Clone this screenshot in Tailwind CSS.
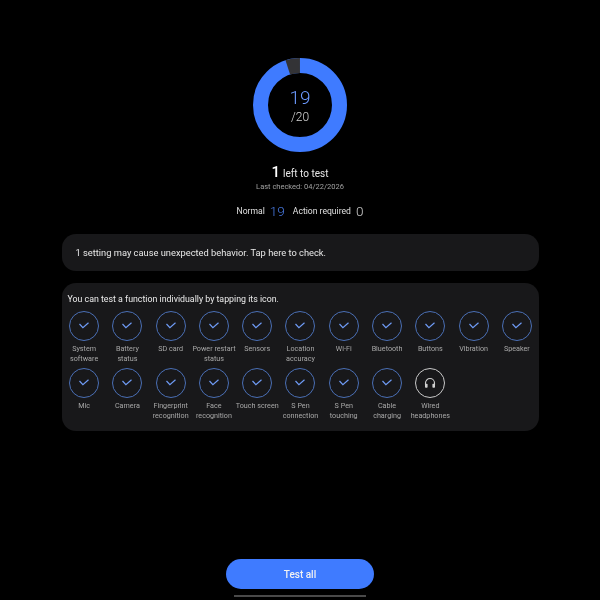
<!DOCTYPE html>
<html lang="en">
<head>
  <meta charset="UTF-8" />
  <title>Diagnostics</title>
  <script src="https://cdn.jsdelivr.net/npm/@tailwindcss/browser@4"></script>
</head>
<body class="bg-black text-white font-['Roboto',sans-serif]">
  <div class="w-[600px] h-[600px] overflow-hidden flex flex-col items-center pt-[58px] will-change-transform">

    <!-- Ring -->
    <div class="relative w-[94px] h-[94px]">
      <svg width="94" height="94" viewBox="0 0 94 94">
        <circle cx="47" cy="47" r="39.5" fill="none" stroke="#3f7bff" stroke-width="15" />
        <circle cx="47" cy="47" r="39.5" fill="none" stroke="#333336" stroke-width="15" pathLength="20" stroke-dasharray="1 19" transform="rotate(-108 47 47)" />
      </svg>
      <div class="absolute inset-0 flex flex-col items-center justify-center">
        <span class="text-[19px] leading-[24px] font-light text-[#6c9aff]">19</span>
        <span class="text-[12px] leading-[14px] font-light text-[#d8d8d8]">/20</span>
      </div>
    </div>

    <!-- Summary -->
    <div class="mt-[10px] flex items-baseline gap-[3px] h-[20px] leading-[20px]">
      <span class="text-[15px] font-medium">1</span>
      <span class="text-[10px] text-[#e8e8e8]">left to test</span>
    </div>
    <p class="mt-[-1px] text-[7.5px] leading-[12px] text-[#a0a0a0]">Last checked: 04/22/2026</p>
    <div class="mt-[8px] flex items-center h-[20px] text-[8.6px] text-[#e0e0e0]">
      <span>Normal</span>
      <span class="ml-[5px] text-[13.5px] font-light text-[#4a7de8]">19</span>
      <span class="ml-[8px]">Action required</span>
      <span class="ml-[5px] text-[13.5px] font-light text-[#d0d0d0]">0</span>
    </div>

    <!-- Notice -->
    <div class="mt-[13px] w-[477px] h-[37px] rounded-[14px] bg-[#18181a] flex items-center pl-[14px] text-[9.3px] text-[#e8e8e8]">
      1 setting may cause unexpected behavior. Tap here to check.
    </div>

    <!-- Function tests -->
    <div class="mt-[12px] w-[477px] h-[148px] rounded-[14px] bg-[#18181a]">
      <p class="pt-[10px] pl-[6px] text-[8.8px] leading-[12px] text-[#ececec]">You can test a function individually by tapping its icon.</p>
      <div id="grid" class="mt-[6px] pl-[1px] grid grid-cols-11 gap-y-[5px]"></div>
    </div>

    <div class="flex-1"></div>

    <!-- Bottom -->
    <button class="w-[148px] h-[30px] rounded-full bg-[#3f7bff] text-[10px] font-medium text-[#f2f2f2]">Test all</button>
    <div class="mt-[6px] mb-[3px] w-[132px] h-[2px] bg-[#4a4a4a]"></div>
  </div>

  <script>
    const items = [
      ['System', 'software'], ['Battery', 'status'], ['SD card'], ['Power restart', 'status'],
      ['Sensors'], ['Location', 'accuracy'], ['Wi-Fi'], ['Bluetooth'], ['Buttons'], ['Vibration'], ['Speaker'],
      ['Mic'], ['Camera'], ['Fingerprint', 'recognition'], ['Face', 'recognition'], ['Touch screen'],
      ['S Pen', 'connection'], ['S Pen', 'touching'], ['Cable', 'charging'], ['Wired', 'headphones']
    ];
    const check = '<svg width="10" height="8" viewBox="0 0 10 8" fill="none" stroke="#6f9bf5" stroke-width="1.2"><path d="M0.5 2 L3.9 5.6 L9.5 0.8"/></svg>';
    const phones = '<svg width="14" height="14" viewBox="0 0 14 14" fill="none"><path d="M2.5 9 V7 a4.5 4.5 0 0 1 9 0 V9" stroke="#d0d0d0" stroke-width="1.1"/><rect x="2" y="7.8" width="2.6" height="4" rx="0.8" fill="#d0d0d0"/><rect x="9.4" y="7.8" width="2.6" height="4" rx="0.8" fill="#d0d0d0"/></svg>';

    document.getElementById('grid').innerHTML = items.map((label, i) => {
      const wired = i === items.length - 1;
      return `
        <div class="flex flex-col items-center h-[52px]">
          <div class="w-[30px] h-[30px] shrink-0 rounded-full border flex items-center justify-center ${wired ? 'border-[#c8c8c8]' : 'border-[#4a6fb5]'}">
            ${wired ? phones : check}
          </div>
          <div class="mt-[3px] text-[7.2px] leading-[9.5px] text-center whitespace-nowrap text-[#a8a8a8]">${label.join('<br>')}</div>
        </div>`;
    }).join('');
  </script>
</body>
</html>
